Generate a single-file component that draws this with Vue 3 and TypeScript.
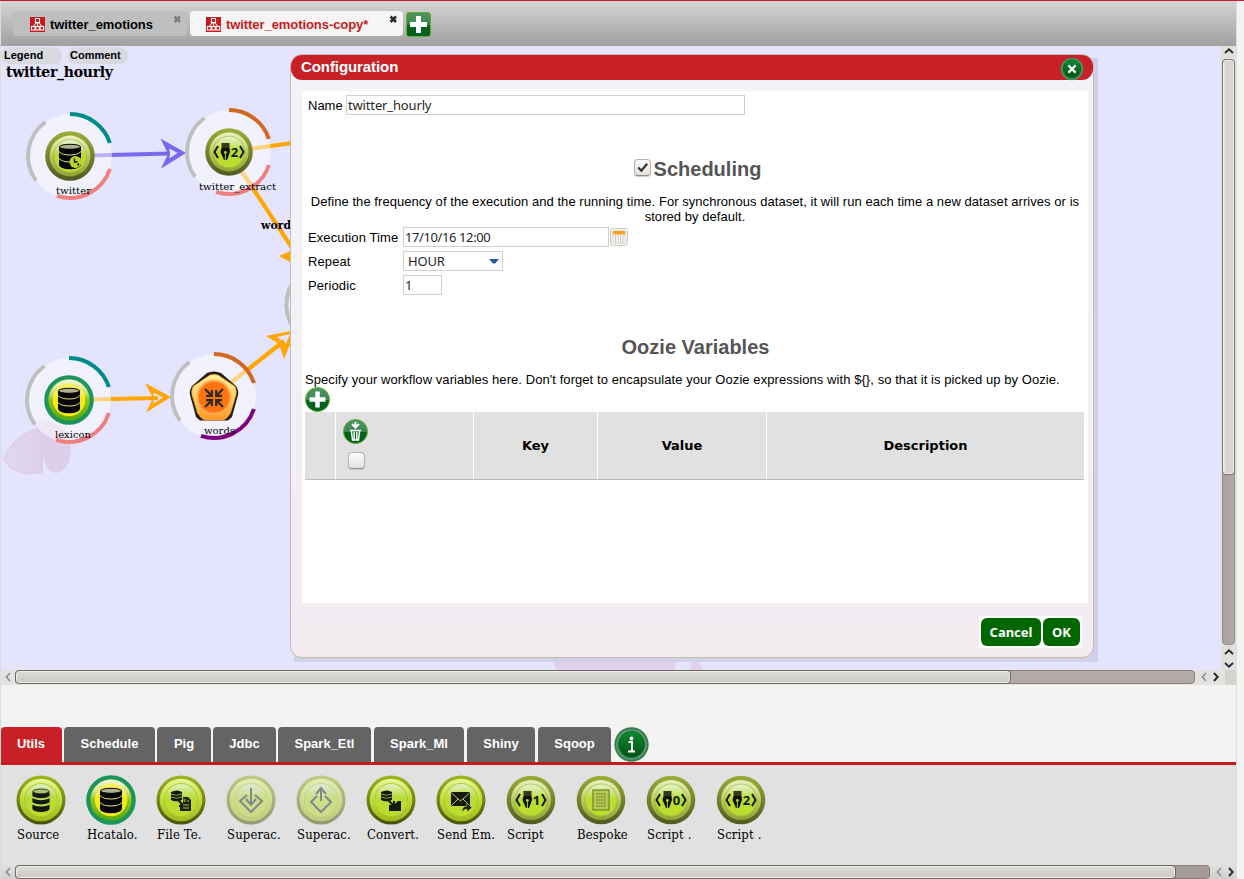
<script setup lang="ts">
interface PaletteTab {
  label: string
  width: number
  gap: number
}
interface PaletteItem {
  label: string
  base: string
  glyph: string
  digit?: string
  faded?: boolean
}
interface FlowNode {
  x: number
  y: number
  label: string
  labelX: number
  labelWidth: number
  top: string
  bottom: string
  icon: string
}

const paletteTabs: PaletteTab[] = [
  { label: 'Utils', width: 61, gap: 2 },
  { label: 'Schedule', width: 91, gap: 2 },
  { label: 'Pig', width: 54, gap: 2 },
  { label: 'Jdbc', width: 63, gap: 2 },
  { label: 'Spark_Etl', width: 93, gap: 3 },
  { label: 'Spark_Ml', width: 90, gap: 3 },
  { label: 'Shiny', width: 68, gap: 3 },
  { label: 'Sqoop', width: 73, gap: 3 },
]

const paletteItems: PaletteItem[] = [
  { label: 'Source', base: 'base-lime', glyph: 'g-source' },
  { label: 'Hcatalo.', base: 'base-green', glyph: 'g-db' },
  { label: 'File Te.', base: 'base-lime', glyph: 'g-file' },
  { label: 'Superac.', base: 'base-lime', glyph: 'g-in', faded: true },
  { label: 'Superac.', base: 'base-lime', glyph: 'g-out', faded: true },
  { label: 'Convert.', base: 'base-lime', glyph: 'g-convert' },
  { label: 'Send Em.', base: 'base-lime', glyph: 'g-mail' },
  { label: 'Script', base: 'base-olive', glyph: 'g-script', digit: '1' },
  { label: 'Bespoke', base: 'base-olive', glyph: 'g-doc' },
  { label: 'Script .', base: 'base-olive', glyph: 'g-script', digit: '0' },
  { label: 'Script .', base: 'base-olive', glyph: 'g-script', digit: '2' },
]

const nodes: FlowNode[] = [
  { x: 70, y: 156, label: 'twitter', labelX: 56, labelWidth: 35, top: '#008b8b', bottom: '#f08080', icon: 'twitter' },
  { x: 229, y: 152, label: 'twitter_extract', labelX: 199, labelWidth: 77, top: '#d2691e', bottom: '#f08080', icon: 'script' },
  { x: 69, y: 400, label: 'lexicon', labelX: 55, labelWidth: 36, top: '#008b8b', bottom: '#f08080', icon: 'lexicon' },
  { x: 214, y: 396, label: 'words', labelX: 204, labelWidth: 31, top: '#d2691e', bottom: '#800080', icon: 'words' },
]
</script>

<template>
  <div class="app">
    <svg class="defs" width="0" height="0" aria-hidden="true">
      <defs>
        <linearGradient id="oliveRing" x1="0" y1="0" x2="0" y2="1">
          <stop offset="0" stop-color="#9cae38" /><stop offset="1" stop-color="#4e5a22" />
        </linearGradient>
        <linearGradient id="limeRing" x1="0" y1="0" x2="0" y2="1">
          <stop offset="0" stop-color="#9fb722" /><stop offset="1" stop-color="#47520a" />
        </linearGradient>
        <linearGradient id="oliveMid" x1="0" y1="0" x2="0" y2="1">
          <stop offset="0" stop-color="#e4eaa0" /><stop offset=".45" stop-color="#bccc5e" /><stop offset="1" stop-color="#8fa233" />
        </linearGradient>
        <linearGradient id="limeMid" x1="0" y1="0" x2="0" y2="1">
          <stop offset="0" stop-color="#e6f388" /><stop offset=".4" stop-color="#c5e03c" /><stop offset="1" stop-color="#9fb91e" />
        </linearGradient>
        <linearGradient id="face" x1="0" y1="0" x2="0" y2="1">
          <stop offset="0" stop-color="#dcefc0" /><stop offset=".4" stop-color="#b9dc35" /><stop offset="1" stop-color="#bedd2c" />
        </linearGradient>
        <linearGradient id="greenMid" x1="0" y1="0" x2="0" y2="1">
          <stop offset="0" stop-color="#f2f8c0" /><stop offset=".3" stop-color="#c8e060" /><stop offset=".5" stop-color="#8fc31c" /><stop offset="1" stop-color="#57a80e" />
        </linearGradient>
        <linearGradient id="gloss" x1="0" y1="0" x2="0" y2="1">
          <stop offset="0" stop-color="#fff" stop-opacity=".65" /><stop offset="1" stop-color="#fff" stop-opacity=".1" />
        </linearGradient>
        <linearGradient id="greenBtn" x1="0" y1="0" x2="0" y2="1">
          <stop offset="0" stop-color="#4f9465" /><stop offset=".5" stop-color="#3d8653" /><stop offset=".52" stop-color="#03601d" /><stop offset="1" stop-color="#03601d" />
        </linearGradient>
        <linearGradient id="darkGreen" x1="0" y1="0" x2="0" y2="1">
          <stop offset="0" stop-color="#0b8a30" /><stop offset="1" stop-color="#044e16" />
        </linearGradient>
        <linearGradient id="pentagon" x1="0" y1="0" x2="0" y2="1">
          <stop offset="0" stop-color="#fff29a" /><stop offset=".5" stop-color="#ffd065" /><stop offset="1" stop-color="#ff9622" />
        </linearGradient>
        <linearGradient id="petal" x1="0" y1="0" x2="1" y2="0">
          <stop offset="0" stop-color="#e1d8f2" /><stop offset="1" stop-color="#dccfe9" />
        </linearGradient>
      </defs>

      <symbol id="base-olive" viewBox="-25 -25 50 50">
        <circle r="24.3" fill="url(#oliveRing)" />
        <circle r="20" fill="url(#oliveMid)" />
        <circle r="16.6" fill="#a3b948" />
        <circle r="15.6" fill="url(#face)" />
        <path d="M-20 0A20 20 0 0 1 20 0Q0 -8 -20 0Z" fill="url(#gloss)" opacity=".45" />
      </symbol>
      <symbol id="base-lime" viewBox="-25 -25 50 50">
        <circle r="24.5" fill="url(#limeRing)" />
        <circle r="21.3" fill="url(#limeMid)" />
        <circle r="17" fill="#aac832" />
        <circle r="16" fill="url(#face)" />
        <path d="M-21 0A21 21 0 0 1 21 0Q0 -8 -21 0Z" fill="url(#gloss)" opacity=".2" />
      </symbol>
      <symbol id="base-green" viewBox="-25 -25 50 50">
        <circle r="24.8" fill="#1c955b" />
        <circle r="20.6" fill="url(#greenMid)" />
        <path d="M-20 -1A20 20 0 0 1 20 -1Q0 -12 -20 -1Z" fill="url(#gloss)" opacity=".5" />
        <circle r="16.3" fill="#f3ea17" />
        <path d="M-16 -3A16.300 16.300 0 0 1 16 -3Q0 -12 -16 -3Z" fill="#fff" opacity=".3" />
      </symbol>

      <symbol id="g-db" viewBox="-25 -25 50 50">
        <path d="M-11 -9V9Q-10 13 0 13.3Q10 13 11 9V-9Z" fill="#050505" />
        <ellipse cy="-9.2" rx="10.6" ry="2.5" fill="#aeb18b" stroke="#050505" />
        <path d="M-11 -4.500Q-8 -1 0 -1Q8 -1 11 -4.500M-11 2.500Q-8 6 0 6Q8 6 11 2.500" fill="none" stroke="#e3e070" stroke-width="1.1" />
      </symbol>
      <symbol id="g-source" viewBox="-25 -25 50 50">
        <path d="M-8.600 -8.500V9Q-7 12 0 12Q7 12 8.600 9V-8.500Z" fill="#15180c" />
        <ellipse cy="-8.600" rx="8" ry="2.400" fill="#a8c478" stroke="#333b20" />
        <path d="M-9.500 -3.200Q0 1.500 9.500 -3.200M-9.500 3.200Q0 8 9.500 3.200" fill="none" stroke="#bfdc4a" stroke-width="2" />
      </symbol>
      <symbol id="g-smalldb" viewBox="-25 -25 50 50">
        <path d="M-10 -8V0Q-5 2.500 1 0V-8Q-4 -11 -10 -8Z" fill="#15180c" />
        <path d="M-10 -6Q-5 -3.500 1 -6M-10 -3Q-5 -.5 1 -3" fill="none" stroke="#a9c63a" stroke-width=".8" />
        <path d="M-3 0L2 5M3 1V6H-2" fill="none" stroke="#15180c" stroke-width="2" />
      </symbol>
      <symbol id="g-file" viewBox="-25 -25 50 50">
        <use href="#g-smalldb" x="-25" y="-25" width="50" height="50" />
        <path d="M2 -3H7L10 0V11H-1V4H3Z" fill="#1d210c" />
        <path d="M4 -1V2M6 1H8M2 5H8M2 8H8" stroke="#a9c63a" stroke-width="1.200" />
      </symbol>
      <symbol id="g-convert" viewBox="-25 -25 50 50">
        <use href="#g-smalldb" x="-25" y="-25" width="50" height="50" />
        <path d="M-2 5H3L5 3L7 1H10V11H-2Z" fill="#15180c" />
      </symbol>
      <symbol id="g-in" viewBox="-25 -25 50 50">
        <path d="M-4 -5L-11 1L0 12L11 1L4 -5M0 -12V4M-5 -1L0 5L5 -1" fill="none" stroke="#2b3038" stroke-width="2" />
      </symbol>
      <symbol id="g-out" viewBox="-25 -25 50 50">
        <path d="M-4 -4L-10 2L0 12L10 2L4 -4M0 1V-11M-5 -6L0 -12L5 -6" fill="none" stroke="#2b3038" stroke-width="2" />
      </symbol>
      <symbol id="g-mail" viewBox="-25 -25 50 50">
        <rect x="-10" y="-8" width="19" height="14" rx="1.500" fill="#17190d" />
        <path d="M-9 -6.500L-.5 1L8 -6.500M-9 5L-3 -1M8 5L2 -1" fill="none" stroke="#b8c96a" stroke-width="1" />
        <path d="M1 12Q1 6 6 6V3L11 7.500L6 12V9Q3 9 1 12Z" fill="#17190d" stroke="#b9dc35" stroke-width=".6" />
      </symbol>
      <symbol id="g-doc" viewBox="-25 -25 50 50">
        <rect x="-8" y="-10" width="16" height="20" fill="#b4ca52" stroke="#77892a" stroke-width="1.300" />
        <path d="M-5 -6H5M-5 -3H5M-5 0H5M-5 3H5M-5 6H5" stroke="#6c7c26" stroke-width="1.200" stroke-dasharray="2 .6" />
      </symbol>
      <symbol id="g-script" viewBox="-25 -25 50 50">
        <path d="M-11 -6L-14.500 0L-11 6M11 -6L14.500 0L11 6" fill="none" stroke="#15180c" stroke-width="2" />
        <path d="M-7.500 -9H.5V-4H-7.500Z" fill="#34381c" />
        <path d="M-7.500 -4H.5L1 0L-2 8H-5L-8.500 0Z" fill="#0f1108" />
        <path d="M-3.600 8V1.500" stroke="#b9dc35" stroke-width=".9" />
        <circle cx="-3.600" cy=".5" r="1.400" fill="#b9dc35" />
      </symbol>
      <symbol id="workflow-mark" viewBox="0 0 15 15">
        <rect width="15" height="15" fill="#c8191f" />
        <path d="M5.500 1.500h4v4h-4zM1.500 9.500h3.500v3.500h-3.500zM5.800 9.500h3.500v3.500h-3.500zM10.200 9.500h3.500v3.500h-3.500zM7.500 5.500v4M6.500 5.500L3 9.500M8.500 5.500L12 9.500" fill="none" stroke="#fff" stroke-width="1.100" />
      </symbol>
    </svg>

    <div class="shell">
      <header class="topbar">
        <div class="file-tab">
          <svg class="file-icon" viewBox="0 0 15 15"><use href="#workflow-mark" width="15" height="15" /></svg>
          <span class="file-name">twitter_emotions</span>
          <svg class="tab-close" viewBox="0 0 9 9"><path d="M1.500 1.500L7 7M7 1.500L1.500 7" stroke="#7d7d7d" stroke-width="2.600" /></svg>
        </div>
        <div class="file-tab active">
          <svg class="file-icon" viewBox="0 0 15 15"><use href="#workflow-mark" width="15" height="15" /></svg>
          <span class="file-name">twitter_emotions-copy*</span>
          <svg class="tab-close" viewBox="0 0 9 9"><path d="M1.500 1.500L7 7M7 1.500L1.500 7" stroke="#2c2c2c" stroke-width="2.600" /></svg>
        </div>
        <svg class="add-tab" viewBox="0 0 25 25"><rect x=".5" y=".5" width="24" height="24" rx="2.500" fill="url(#greenBtn)" stroke="#62ad2c" /><path d="M12.500 4V21M4 12.500H21" stroke="#fff" stroke-width="5" /></svg>
      </header>

      <div class="workspace">
        <main class="canvas">
          <svg class="flow" width="1220" height="624" viewBox="1 46 1220 624">
            <g class="watermark">
              <path d="M4 459Q16 433 42 428V472Q16 478 4 459Z" fill="url(#petal)" stroke="#ddcfea" stroke-width="2" />
              <path d="M36 424Q44 416 55 424Q76 430 69 462Q58 482 46 466Q40 448 36 424Z" fill="#decfe9" />
              <path d="M552 657H678L674 670H556ZM692 660Q696 656 703 670H690Z" fill="#e0d0ea" />
            </g>
            <g fill="none" stroke-width="4.200">
              <path d="M70 156L170 153.500" stroke="#7b68ee" />
              <path d="M229 152L310 140.500M229 152L300 260M69 400L158 398M214 396L284 341" stroke="#ffa500" />
            </g>
            <path d="M160.500 138.500L186 153L161 168.500L168 154ZM169.500 148.500V158.500L177.500 153Z" fill="#7b68ee" fill-rule="evenodd" />
            <path d="M145 383L171 397L146 412.500L153 398ZM153.500 392.500V403.500L163 397.500Z" fill="#ffa500" fill-rule="evenodd" />
            <path d="M266 336L296 330L284 359L279 344ZM277 337L286 344L290 334Z" fill="#ffa500" fill-rule="evenodd" />
            <path d="M279 256L292 250V263Z" fill="#ffa500" />
            <path d="M303 271A42 42 0 0 0 295 330" fill="none" stroke="#bfbfbf" stroke-width="4" />

            <g v-for="node in nodes" :key="node.label" :transform="`translate(${node.x} ${node.y})`">
              <circle r="42" fill="#fff" fill-opacity=".5" />
              <g fill="none" stroke-width="4">
                <path d="M-24.500 -34A42 42 0 0 0 -34 24.700" stroke="#bfbfbf" />
                <path d="M0 -42A42 42 0 0 1 39.900 -13" :stroke="node.top" />
                <path d="M39.900 13A42 42 0 0 1 -13 39.900" :stroke="node.bottom" />
              </g>
              <template v-if="node.icon === 'words'">
                <path d="M-7 -23Q0 -26 7 -23L22 -10Q25 -5 24 -1L18 21L14 24.500H-14L-18 21L-24 -1Q-25 -5 -22 -10Z" fill="#201b13" />
                <path d="M-4 -21Q0 -22 4 -21L21 -9.500Q23 -5 22 -1L16.500 17Q13 23 9 24H-9Q-13 23 -16.500 17L-22 -1Q-23 -5 -21 -9.500Z" fill="url(#pentagon)" stroke="#f0a030" stroke-width=".7" />
                <circle cy="1" r="17.500" fill="#ffb05c" />
                <circle cy="1.200" r="15.600" fill="#ff7410" />
                <g transform="translate(0 2)" fill="none" stroke="#2a2c22" stroke-width="2.200">
                  <path d="M-9 -9L-3 -3M9 -9L3 -3M-9 9L-3 3M9 9L3 3" />
                  <path d="M-2.200 -8V-2.200H-8M2.200 -8V-2.200H8M-2.200 8V2.200H-8M2.200 8V2.200H8" />
                </g>
              </template>
              <template v-else-if="node.icon === 'lexicon'">
                <use href="#base-green" x="-25" y="-25" width="50" height="50" />
                <use href="#g-db" x="-25" y="-25" width="50" height="50" />
              </template>
              <template v-else-if="node.icon === 'twitter'">
                <use href="#base-olive" x="-25.500" y="-25.500" width="51" height="51" />
                <use href="#g-db" x="-25" y="-25" width="50" height="50" />
                <circle cx="5.500" cy="6" r="6" fill="#b9d52f" />
                <path d="M4.500 2.500V6H7.500M7.500 9.500L9 7.500" fill="none" stroke="#15180c" stroke-width="1.400" />
              </template>
              <template v-else>
                <use href="#base-olive" x="-24.500" y="-24.500" width="49" height="49" />
                <use href="#g-script" x="-25" y="-25" width="50" height="50" />
                <text class="digit" x="1.800" y="4.800">2</text>
              </template>
            </g>
            <text v-for="node in nodes" :key="node.label" class="node-label" :x="node.labelX" :y="node.y + 38" :textLength="node.labelWidth" lengthAdjust="spacingAndGlyphs">{{ node.label }}</text>
            <text class="edge-label" x="261" y="229" textLength="30" lengthAdjust="spacingAndGlyphs">word</text>
          </svg>

          <div class="canvas-head">
            <div class="chips">
              <span class="chip legend">Legend</span>
              <span class="chip">Comment</span>
            </div>
            <h1 class="flow-title">twitter_hourly</h1>
          </div>

          <section class="dialog">
            <div class="dialog-frame">
              <div class="dialog-title">
                <span>Configuration</span>
                <svg class="dialog-close" viewBox="-12 -12 24 24"><circle r="11.300" fill="#4b8f60" /><circle r="9" fill="url(#darkGreen)" stroke="#067427" /><path d="M-3.600 -3.600L3.600 3.600M3.600 -3.600L-3.600 3.600" stroke="#fff" stroke-width="2.200" /></svg>
              </div>
              <div class="panel">
                <div class="name-row">
                  <label>Name</label>
                  <div class="field name-field">twitter_hourly</div>
                </div>
                <div class="heading scheduling">
                  <span class="check"><svg viewBox="0 0 16 16"><path d="M3.500 8L6.800 11.500L13 4" fill="none" stroke="#2d2d2d" stroke-width="2.200" /></svg></span>
                  <h2>Scheduling</h2>
                </div>
                <p class="intro">Define the frequency of the execution and the running time. For synchronous dataset, it will run each time a new dataset arrives or is stored by default.</p>
                <div class="form">
                  <div class="form-row">
                    <label>Execution Time</label>
                    <div class="field time-field">17/10/16 12:00</div>
                    <svg class="calendar" viewBox="0 0 18 18"><rect x=".5" y=".5" width="17" height="17" rx="2" fill="#efeee9" stroke="#cfccc4" /><rect x="3" y="3" width="12" height="12" fill="#fafafa" stroke="#d0ccc0" stroke-width=".6" /><rect x="3" y="3" width="12" height="3.500" fill="#f5a41c" /><path d="M5.500 7V15M8 7V15M10.500 7V15M13 7V15" stroke="#c9c7c0" /></svg>
                  </div>
                  <div class="form-row">
                    <label>Repeat</label>
                    <div class="field select-field"><span>HOUR</span><svg viewBox="0 0 10 5"><path d="M0 0H10L6.500 4Q5 5 3.500 4Z" fill="#2b569e" /></svg></div>
                  </div>
                  <div class="form-row">
                    <label>Periodic</label>
                    <div class="field periodic-field">1</div>
                  </div>
                </div>
                <div class="heading variables"><h2>Oozie Variables</h2></div>
                <p class="hint">Specify your workflow variables here. Don't forget to encapsulate your Oozie expressions with ${}, so that it is picked up by Oozie.</p>
                <svg class="add-row" viewBox="0 0 25 25"><circle cx="12.500" cy="12.500" r="12" fill="url(#greenBtn)" stroke="#62ad2c" /><path d="M12.500 4.500V20.500M4.500 12.500H20.500" stroke="#fff" stroke-width="4.500" /></svg>
                <div class="table-head">
                  <div></div>
                  <div class="tools">
                    <svg viewBox="0 0 25 25"><circle cx="12.500" cy="12.500" r="12" fill="url(#greenBtn)" stroke="#62ad2c" /><path d="M12.500 3V8M9 5L12.500 8.500L16 5" fill="none" stroke="#fff" stroke-width="2" /><path d="M7 11.500H18M8.500 12.500L9.500 21H15.500L16.500 12.500M11.200 13V20.500M13.800 13V20.500" fill="none" stroke="#fff" stroke-width="1.500" /></svg>
                    <span class="check"></span>
                  </div>
                  <div>Key</div>
                  <div>Value</div>
                  <div>Description</div>
                </div>
              </div>
              <div class="dialog-actions">
                <div class="action-box">
                  <button class="cancel">Cancel</button>
                  <button class="ok">OK</button>
                </div>
              </div>
            </div>
          </section>
        </main>
        <div class="vbar">
          <svg class="arrow-v" viewBox="0 0 10 6"><path d="M1 5L5 1.300L9 5" /></svg>
          <div class="vtrack"><div class="vthumb"></div></div>
          <svg class="arrow-v" viewBox="0 0 10 6"><path d="M1 5L5 1.300L9 5" /></svg>
          <svg class="arrow-v" viewBox="0 0 10 6"><path d="M1 1L5 4.700L9 1" /></svg>
        </div>
      </div>

      <div class="hbar">
        <svg class="arrow-h dim" viewBox="0 0 6 10"><path d="M5 1L1.300 5L5 9" /></svg>
        <div class="htrack top-track"><div class="hthumb top-thumb"></div></div>
        <svg class="arrow-h dim" viewBox="0 0 6 10"><path d="M5 1L1.300 5L5 9" /></svg>
        <svg class="arrow-h" viewBox="0 0 6 10"><path d="M1 1L4.700 5L1 9" /></svg>
        <span class="corner"></span>
      </div>

      <nav class="palette-tabs">
        <div v-for="(tab, i) in paletteTabs" :key="tab.label" class="palette-tab" :class="{ selected: i === 0 }" :style="{ width: tab.width + 'px', marginRight: tab.gap + 'px' }">{{ tab.label }}</div>
        <svg class="info" viewBox="-17.500 -17.500 35 35"><circle r="17.200" fill="#3a7d51" /><circle r="15.300" fill="#57976b" /><circle r="13" fill="url(#darkGreen)" stroke="#066a22" /><circle cy="-6" r="1.900" fill="#fff" /><path d="M-3 -2.500H.5V6.500M-3.500 7H3.500" fill="none" stroke="#fff" stroke-width="2" /></svg>
      </nav>

      <section class="palette">
        <div v-for="(item, i) in paletteItems" :key="i" class="palette-item">
          <svg class="palette-icon" :class="{ faded: item.faded }" viewBox="-25 -25 50 50">
            <use :href="'#' + item.base" x="-25" y="-25" width="50" height="50" />
            <use :href="'#' + item.glyph" x="-25" y="-25" width="50" height="50" />
            <text v-if="item.digit" class="digit" x="1.800" y="4.800">{{ item.digit }}</text>
          </svg>
          <span class="palette-label">{{ item.label }}</span>
        </div>
      </section>

      <div class="hbar bottom">
        <svg class="arrow-h dim" viewBox="0 0 6 10"><path d="M5 1L1.300 5L5 9" /></svg>
        <div class="htrack bottom-track"><div class="hthumb bottom-thumb"></div></div>
        <svg class="arrow-h dim" viewBox="0 0 6 10"><path d="M5 1L1.300 5L5 9" /></svg>
        <svg class="arrow-h" viewBox="0 0 6 10"><path d="M1 1L4.700 5L1 9" /></svg>
      </div>
    </div>
  </div>
</template>

<style>
html, body { margin: 0; overflow: hidden; }
</style>

<style scoped>
* { box-sizing: border-box; }
svg { display: block; flex: none; }
h1, h2, p { margin: 0; }
.app { width: 1244px; height: 879px; background: #f3f3f1; font-family: "Liberation Sans", Arial, sans-serif; font-size: 13px; color: #000; overflow: hidden; border-top: 1px solid #c41e26; }
.defs { position: absolute; }
.shell { width: 1237px; height: 878px; border-left: 1px solid #dedcd8; border-right: 1px solid #e0deda; display: flex; flex-direction: column; }

.topbar { height: 45px; display: flex; align-items: flex-start; padding: 10px 0 0 12px; background: linear-gradient(#d4d4d4, #a0a0a0); flex: none; }
.file-tab { display: flex; align-items: center; width: 174px; height: 25px; padding: 2px 5px 0 17px; margin-right: 3px; background: #bfbfbf; border-radius: 4px; font-weight: bold; }
.file-tab.active { width: 213px; padding-left: 16px; background: #f6f5f3; color: #c8191f; }
.file-icon { width: 15px; height: 15px; margin-right: 5px; }
.file-tab .file-name { white-space: nowrap; letter-spacing: -.07px; }
.tab-close { width: 9px; height: 9px; margin-left: auto; align-self: flex-start; margin-top: 2px; }
.add-tab { width: 25px; height: 25px; margin-top: 1px; }

.workspace { display: flex; height: 624px; flex: none; }
.canvas { position: relative; width: 1220px; background: #e4e4ff; overflow: hidden; }
.flow { position: absolute; inset: 0; }
.digit { font: bold 13px "Open Sans", sans-serif; fill: #15180c; }
.node-label { font: 10px "DejaVu Serif", serif; }
.edge-label { font: bold 11px "DejaVu Serif", serif; }
.canvas-head { position: relative; width: 160px; padding-top: 1px; }
.chips { display: flex; gap: 6px; }
.chip { height: 17px; line-height: 17px; width: 60px; padding-left: 2px; border-radius: 8px; background: #d9dadf; font-size: 11px; font-weight: bold; }
.chip.legend { padding-left: 3px; margin-left: 0; width: 61px; }
.flow-title { font: bold 14px/16px "DejaVu Serif", serif; padding-left: 5px; letter-spacing: -.28px; }

.dialog { position: absolute; left: 289px; top: 8px; width: 804px; height: 604px; }
.dialog::before { content: ""; position: absolute; left: 4px; top: 4px; width: 804px; height: 604px; background: #d0d0e8; }
.dialog-frame { position: relative; height: 604px; border: 1px solid #c3bdb3; border-radius: 12px; background: linear-gradient(#f3f4f8, #f2ecf1); display: flex; flex-direction: column; padding: 0 0 0 1px; }
.dialog-title { height: 25px; margin: 0 0 0 -1px; border-radius: 11px; background: #c72027; color: #fff; font-weight: bold; font-size: 15px; letter-spacing: -.08px; display: flex; align-items: center; justify-content: space-between; padding: 0 9px 2px 10px; flex: none; }
.dialog-close { width: 24px; height: 24px; position: relative; top: 2px; }
.panel { margin: 11px 5px 0 10px; height: 512px; background: #fff; padding: 4px 3px 0; line-height: 15px; flex: none; }
.name-row { display: flex; align-items: center; height: 20px; padding-left: 3px; }
.name-row label { width: 38px; }
.field { height: 20px; border: 1px solid #cfcfcf; background: #fff; font: 13px/18px "Noto Sans", sans-serif; color: #262626; padding-left: 1px; white-space: nowrap; letter-spacing: -.15px; }
.name-field { width: 399px; }
.heading { display: flex; align-items: center; justify-content: center; height: 24px; }
.heading h2 { font-size: 20px; line-height: 24px; color: #555; font-weight: bold; }
.scheduling { margin-top: 42px; gap: 3px; padding-left: 5px; }
.check { display: block; width: 17px; height: 17px; border: 1px solid #b5b3b0; border-bottom-color: #8d8b88; border-radius: 4px; background: linear-gradient(#fdfdfd, #e2e0de); box-shadow: 0 1px 1px #ccc; }
.scheduling .check { margin-top: -3px; }
.check svg { width: 15px; height: 15px; }
.intro { margin-top: 13px; text-align: center; padding: 0 3px; letter-spacing: .055px; }
.form { margin-top: 1px; padding-left: 3px; }
.form-row { display: flex; align-items: center; height: 24px; }
.form-row label { width: 95px; letter-spacing: .1px; }
.time-field { width: 206px; letter-spacing: -.4px; }
.calendar { width: 18px; height: 18px; margin-left: 1px; }
.select-field { width: 100px; display: flex; justify-content: space-between; align-items: center; padding: 0 3px 0 4px; }
.select-field svg { width: 10px; height: 5px; }
.periodic-field { width: 39px; }
.variables { margin-top: 38px; padding-left: 1px; }
.hint { margin-top: 13px; white-space: nowrap; height: 16px; letter-spacing: .066px; }
.add-row { width: 25px; height: 25px; margin-top: -1px; }
.table-head { display: grid; grid-template-columns: 30px 138px 124px 169px 1fr; width: 779px; height: 68px; border-bottom: 1px solid #b7b9c4; background: #e1e1e1; font: bold 13px/15px "DejaVu Sans", sans-serif; }
.table-head > div { display: flex; align-items: center; justify-content: center; border-left: 1px solid #fff; }
.table-head > div:first-child { border-left: 0; }
.table-head > .tools { flex-direction: column; align-items: flex-start; justify-content: flex-start; padding: 7px 0 0 7px; gap: 8px; }
.tools svg { width: 25px; height: 25px; }
.tools .check { margin-left: 5px; }
.dialog-actions { display: flex; justify-content: flex-end; padding: 13px 11px 0 0; }
.action-box { display: flex; gap: 2px; padding: 2px; background: #fff; height: 32px; }
.action-box button { height: 28px; border: 0; border-radius: 6px; background: #060; color: #fff; font: bold 13px/28px "Noto Sans", sans-serif; padding: 0; }
.cancel { width: 60px; }
.ok { width: 37px; }

.vbar { width: 15px; background: #e1e0de; display: flex; flex-direction: column; align-items: center; padding-top: 2px; }
.arrow-v { width: 10px; height: 6px; margin-bottom: 5px; }
.arrow-v + .arrow-v { margin-top: 2px; }
.arrow-v path, .arrow-h path { fill: none; stroke: #2a2a2a; stroke-width: 1.900; }
.arrow-h.dim path { stroke: #8a8a8a; stroke-width: 1.500; }
.vtrack { width: 13px; height: 586px; margin-bottom: 4px; background: linear-gradient(90deg, #a8a09d, #b3aba8); border: 1px solid #958e8a; border-radius: 4px; flex: none; }
.vthumb { width: 13px; height: 416px; margin: -1px; border: 1.500px solid #7d7570; border-radius: 4px; background: linear-gradient(90deg, #f4f3f2, #d5d1ce 30%, #dcd8d5); box-shadow: inset 0 0 0 1px #f1f0ee; }
.hbar { height: 15px; display: flex; align-items: flex-start; background: #e3e2e1; padding-left: 4px; flex: none; }
.arrow-h { width: 6px; height: 10px; margin: 2px 6px 0 0; }
.hbar > .arrow-h:first-child { margin-right: 4px; }
.htrack { height: 14px; background: #b1aaa6; border: 1px solid #87807c; border-radius: 4px; flex: none; }
.hthumb { height: 14px; margin: -1px; border: 1.500px solid #6f6964; border-radius: 4px; background: linear-gradient(#dddcd7, #c9c8c2); box-shadow: inset 0 0 0 1px #eeede9; }
.top-track { width: 1180px; margin-right: 6px; }
.top-thumb { width: 996px; }
.corner { width: 15px; height: 15px; margin-left: auto; background: #d6d3cf; }
.bottom { height: 14px; background: linear-gradient(#e1e1e1, #cfcfce); }
.bottom-track { width: 1195px; margin-right: 6px; background: #a39b97; }
.bottom-thumb { width: 1161px; }

.palette-tabs { display: flex; align-items: flex-start; height: 80px; padding-top: 42px; border-bottom: 3px solid #c8191f; flex: none; }
.palette-tab { height: 35px; line-height: 34px; text-align: center; background: #646464; color: #fff; font-weight: bold; border-radius: 4px 4px 0 0; flex: none; }
.palette-tab.selected { background: #c72027; padding-right: 1px; }
.info { width: 35px; height: 35px; }
.palette { display: flex; height: 100px; padding: 10px 0 0 15px; background: #e1e1e1; flex: none; }
.palette-item { width: 70px; flex: none; }
.palette-icon { width: 50px; height: 50px; }
.faded { opacity: .5; }
.palette-label { display: block; margin-top: 2px; padding-left: 1px; white-space: nowrap; font: 13px/16px "DejaVu Serif Condensed", "DejaVu Serif", serif; font-stretch: condensed; letter-spacing: .12px; }
</style>
